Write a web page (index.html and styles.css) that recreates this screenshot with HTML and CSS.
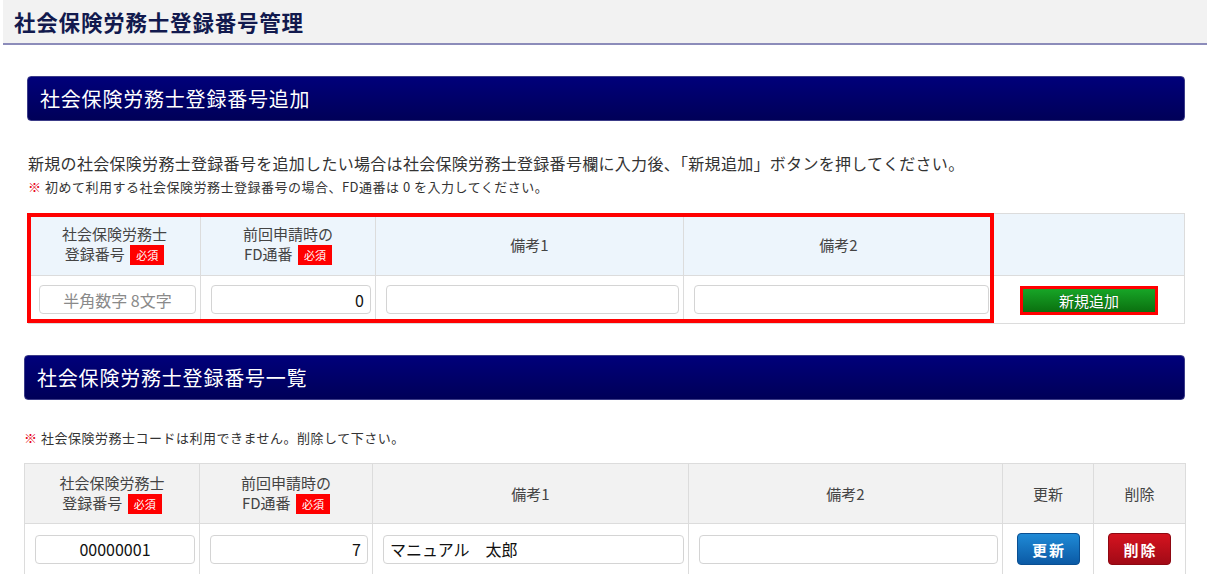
FILE: index.html
```html
<!DOCTYPE html>
<html lang="ja">
<head>
  <meta charset="UTF-8">
  <title>社会保険労務士登録番号管理</title>
  <meta name="viewport" content="width=device-width, initial-scale=1.0">
  <link rel="stylesheet" href="styles.css">
</head>
<body>

<div class="page">
  <header class="page-header">
    <h1>社会保険労務士登録番号管理</h1>
  </header>

  <main class="content">
    <section class="block block-add">
      <h2 class="block-title">社会保険労務士登録番号追加</h2>
      <p class="lead">新規の社会保険労務士登録番号を追加したい場合は社会保険労務士登録番号欄に入力後、「新規追加」ボタンを押してください。</p>
      <p class="note"><span class="mark">※</span> 初めて利用する社会保険労務士登録番号の場合、FD通番は 0 を入力してください。</p>

      <div class="table-wrap">
        <table class="reg-table add-table">
          <colgroup>
            <col class="c-no">
            <col class="c-fd">
            <col class="c-memo1">
            <col class="c-memo2">
            <col class="c-act">
          </colgroup>
          <thead>
            <tr>
              <th>社会保険労務士<br>登録番号 <span class="req">必須</span></th>
              <th>前回申請時の<br>FD通番 <span class="req">必須</span></th>
              <th>備考1</th>
              <th>備考2</th>
              <th></th>
            </tr>
          </thead>
          <tbody>
            <tr>
              <td><input type="text" class="field center" placeholder="半角数字 8文字"></td>
              <td><input type="text" class="field right" value="0"></td>
              <td><input type="text" class="field"></td>
              <td><input type="text" class="field"></td>
              <td class="act"><button class="btn-add">新規追加</button></td>
            </tr>
          </tbody>
        </table>
        <div class="highlight"></div>
      </div>
    </section>

    <section class="block block-list">
      <h2 class="block-title">社会保険労務士登録番号一覧</h2>
      <p class="note"><span class="mark">※</span> 社会保険労務士コードは利用できません。削除して下さい。</p>

      <table class="reg-table list-table">
        <colgroup>
          <col class="l-no">
          <col class="l-fd">
          <col class="l-memo1">
          <col class="l-memo2">
          <col class="l-upd">
          <col class="l-del">
        </colgroup>
        <thead>
          <tr>
            <th>社会保険労務士<br>登録番号 <span class="req">必須</span></th>
            <th>前回申請時の<br>FD通番 <span class="req">必須</span></th>
            <th>備考1</th>
            <th>備考2</th>
            <th>更新</th>
            <th>削除</th>
          </tr>
        </thead>
        <tbody>
          <tr>
            <td><input type="text" class="field center" value="00000001"></td>
            <td><input type="text" class="field right" value="7"></td>
            <td><input type="text" class="field" value="マニュアル　太郎"></td>
            <td><input type="text" class="field"></td>
            <td class="act"><button class="btn btn-update">更新</button></td>
            <td class="act"><button class="btn btn-delete">削除</button></td>
          </tr>
        </tbody>
      </table>
    </section>
  </main>
</div>

</body>
</html>
```

FILE: styles.css
```css
* {
  box-sizing: border-box;
}

body {
  margin: 0;
  padding: 0;
  background: #fff;
  font-family: "Noto Sans CJK JP", "Noto Sans", sans-serif;
  color: #333;
}

.page {
  padding: 0 3px;
}

.page-header {
  background: #f2f2f2;
  border-bottom: 2px solid #8c8cba;
  height: 45px;
  padding-left: 11px;
}

.page-header h1 {
  margin: 0;
  font-size: 21.5px;
  line-height: 43px;
  font-weight: 700;
  color: #121a4e;
  letter-spacing: 0.8px;
}

.content {
  padding: 0 22px 0 21px;
}

.block-title {
  margin: 0;
  height: 45px;
  padding-left: 12px;
  font-size: 20px;
  font-weight: 400;
  line-height: 43px;
  letter-spacing: 0.8px;
  color: #fff;
  background: linear-gradient(#00007a, #000058);
  border: 1px solid #3c3c88;
  border-radius: 4px;
}

.block-add {
  padding-top: 31px;
  margin-left: 3px;
}

.block-list {
  padding-top: 31px;
}

.lead {
  margin: 30px 0 0 1px;
  font-size: 16px;
  line-height: 24px;
  letter-spacing: 0.3px;
}

.note {
  margin: 2px 0 0;
  font-size: 13px;
  line-height: 20px;
  letter-spacing: 0.5px;
  color: #333;
}

.block-add .note {
  margin-left: 1px;
}

.block-list .note {
  margin-top: 28px;
}

.mark {
  color: #e60012;
  font-weight: 700;
}

.table-wrap {
  position: relative;
  margin: 16px 0 0 1px;
}

.reg-table {
  border-collapse: collapse;
  table-layout: fixed;
}

.reg-table th,
.reg-table td {
  border: 1px solid #dcdcdc;
  text-align: center;
}

.reg-table th {
  font-size: 15px;
  font-weight: 400;
  line-height: 20px;
  color: #444;
  padding: 0;
}

.reg-table td {
  padding: 0 4px 0 10px;
}

.add-table {
  width: 1156px;
}

.add-table th {
  background: #edf5fc;
  height: 62px;
}

.add-table td {
  height: 48px;
}

.c-no { width: 172px; }
.c-fd { width: 175px; }
.c-memo1 { width: 308px; }
.c-memo2 { width: 310px; }
.c-act { width: 191px; }

.list-table {
  width: 1161px;
  margin-top: 15px;
}

.list-table th {
  background: #f2f2f2;
  height: 60px;
}

.list-table td {
  height: 51px;
}

.l-no { width: 175px; }
.l-fd { width: 173px; }
.l-memo1 { width: 316px; }
.l-memo2 { width: 314px; }
.l-upd { width: 91px; }
.l-del { width: 92px; }

.req {
  display: inline-block;
  vertical-align: middle;
  margin-top: -3px;
  margin-left: 2px;
  background: #ff0000;
  color: #fff;
  font-size: 11px;
  line-height: 20px;
  height: 20px;
  padding: 0 6px;
}

.field {
  width: 100%;
  height: 29px;
  border: 1px solid #d4d4d4;
  border-radius: 4px;
  background: #fff;
  font-family: "Noto Sans CJK JP", "Noto Sans", sans-serif;
  font-size: 16px;
  color: #111;
  padding: 0 6px;
}

.field::placeholder {
  color: #8a8a8a;
}

.field.center {
  text-align: center;
}

.field.right {
  text-align: right;
}

.reg-table td.act {
  padding: 0;
}

.btn-add {
  width: 132px;
  height: 23px;
  border: none;
  outline: 3px solid #ff0000;
  background: linear-gradient(#17a527, #0b700f);
  color: #fff;
  font-family: "Noto Sans CJK JP", sans-serif;
  font-size: 15px;
  line-height: 23px;
  padding: 0;
  text-shadow: 0 0 1px rgba(0, 0, 0, 0.4);
}

.btn {
  width: 63px;
  height: 32px;
  border: none;
  border-radius: 4px;
  color: #fff;
  font-family: "Noto Sans CJK JP", sans-serif;
  font-size: 15px;
  font-weight: 700;
  letter-spacing: 2px;
  padding: 0 0 0 2px;
  cursor: pointer;
}

.btn-update {
  background: linear-gradient(#1f8ad6, #0b5aa5);
  border: 1px solid #0a4f92;
}

.btn-delete {
  background: linear-gradient(#d5131f, #a10a16);
  border: 1px solid #8e0812;
}

.highlight {
  position: absolute;
  left: -1px;
  top: 0;
  width: 967px;
  height: 110px;
  border: 4px solid #ff0000;
  pointer-events: none;
}
```
